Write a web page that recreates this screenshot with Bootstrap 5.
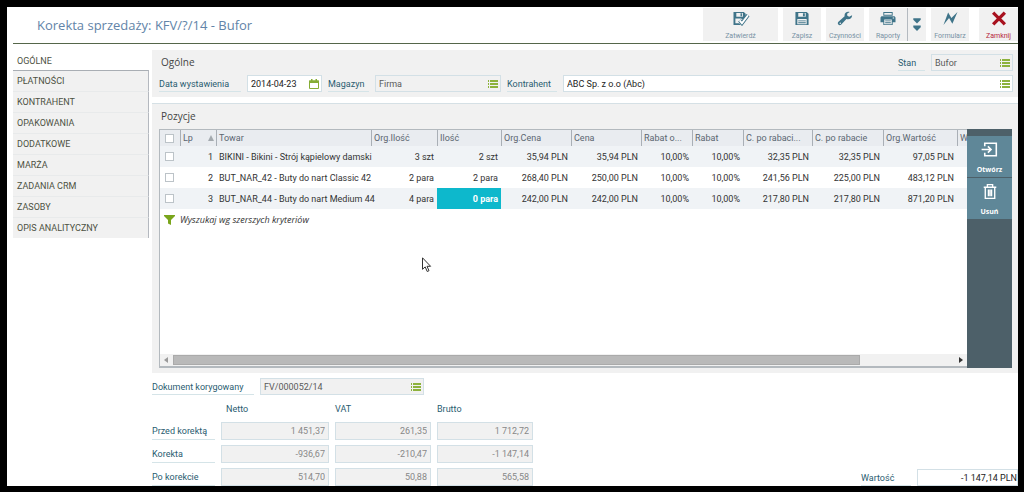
<!DOCTYPE html>
<html lang="pl">
<head>
<meta charset="utf-8">
<meta name="viewport" content="width=device-width, initial-scale=1">
<title>Korekta sprzedaży</title>
<link href="https://cdn.jsdelivr.net/npm/bootstrap@5.3.0/dist/css/bootstrap.min.css" rel="stylesheet">
<style>
  body { background: #000; padding: 7px 6px 6px 7px; font-family: Roboto, "Open Sans", sans-serif; font-size: 9px; line-height: 12px; color: #333; }
  .window { background: #fff; }
  .window svg { display: block; }
  .titlebar { height: 37px; margin-left: 6px; border-bottom: 1px solid #55664a; }
  .titlebar h1 { font-family: "Open Sans", sans-serif; font-size: 13px; line-height: 18px; color: #6284a8; padding-left: 24px; margin: 0; }
  .tools { padding-top: 1px; }
  .tool { background: #f1f1f1; border: 0; border-radius: 0; height: 33px; width: 38px; margin-left: 5px; padding: 3px 0 0; font-size: 7px; line-height: 10px; color: #7891a5; display: flex; flex-direction: column; align-items: center; gap: 5px; }
  .tool svg { width: 20px; height: 17px; fill: #3f7489; }
  .tool-wide { width: 75px; }
  .tool-more { width: 19px; margin-left: 0; border-left: 1px solid #b4bac0; padding-top: 8px; }
  .tool-form { margin-left: 5px; }
  .tool-close { color: #b5263a; width: 39px; margin-left: 10px; }
  .content { padding-top: 6px; }
  .side { width: 136px; margin: 0 3px 0 6px; }
  .side .nav-link { height: 21px; padding: 4px 4px 0; line-height: 12px; color: #4d5243; background: #f1f1f1; border-top: 1px solid #e8eaeb; border-right: 1px solid #b4b8bf; border-radius: 0; transition: none; }
  .side .nav-link.active { background: #fff; border-color: transparent; height: 20px; }
  .side .nav-link.active + .nav-link { border-top-color: #a9aeb4; }
  .panel { background: #f1f1f1; }
  .panel h2 { font-family: "Open Sans", sans-serif; font-size: 10px; line-height: 16px; color: #444; padding-left: 2px; margin: 0; }
  .general { padding: 4px 5px 5px 7px; margin-bottom: 6px; }
  .positions { padding: 4px 6px 5px 7px; border-top: 1px solid #d5e0e5; }
  .positions h2 { padding-bottom: 5px; }
  .cap { font-size: 9px; line-height: 12px; height: 17px; padding-top: 3px; margin-right: 6px; color: #2a5c70; border-bottom: 1px solid #d5e4e8; white-space: nowrap; }
  .cap-state { width: 27px; } .cap-date { width: 82px; } .cap-store { width: 41px; margin-left: 6px; } .cap-client { width: 50px; margin-left: 6px; }
  .cap-doc { width: 102px; } .cap-total { width: 50px; }
  .field { height: 17px; background: #f1f1f1; border: 1px solid #d3e0e6; padding-right: 2px; display: flex; align-items: center; }
  .field input { flex: 1 1 0; min-width: 0; width: 100%; height: 15px; border: 0; background: transparent; padding: 0 3px; font-size: 9px; line-height: 12px; color: #5a5a5a; outline: 0; }
  .field.edit { background: #fff; }
  .field.edit input { color: #222; }
  .field button { border: 0; background: none; padding: 0; }
  .w-date { width: 75px; } .w-store { width: 126px; } .w-state { width: 82px; } .w-doc { width: 164px; } .w-total { width: 101px; }
  .grid { background: #fff; border: 1px solid #b3b9be; border-right: 0; border-bottom-width: 2px; }
  .items { table-layout: fixed; width: 867px; border-collapse: separate; border-spacing: 0; }
  .items th { font-weight: 400; height: 16px; background: #e9ecf0; color: #5b6670; padding: 0 2px; border-left: 1px solid #a9afb6; white-space: nowrap; overflow: hidden; }
  .items th:first-child { border-left: 0; }
  .items td { height: 21px; padding: 0 3px 0 2px; text-align: right; white-space: nowrap; }
  .items td.txt { text-align: left; padding: 0 0 0 3px; }
  .items tbody tr:nth-child(odd) td { background: #f0f3f6; }
  .items tbody td.picked { background: #0db8cc !important; color: #fff; font-weight: 700; }
  .items input { appearance: none; display: block; width: 9px; height: 9px; margin: 0 0 0 3px; background: #fff; border: 1px solid #bcc3c8; }
  .search { height: 21px; padding-left: 4px; font-family: "Open Sans", sans-serif; font-style: italic; font-size: 8px; gap: 5px; color: #333; }
  .search { font-size: 9px; }
  .scroll { height: 12px; background: #f1f1f1; gap: 5px; padding: 0 4px; }
  .thumb { height: 10px; background: #b9b9b9; border: 1px solid #aaa; }
  .actions { width: 45px; background: #4d6069; padding-top: 7px; gap: 1px; }
  .actions button { height: 41px; border: 0; background: #5f8798; color: #fff; font-family: "Open Sans", sans-serif; font-size: 7px; font-weight: 700; line-height: 10px; padding: 3px 0 0; display: flex; flex-direction: column; align-items: center; gap: 5px; }
  .pointer { left: 32.5%; top: 54%; }
  .foot { padding-top: 5px; }
  .sums { display: grid; grid-template-columns: 63px 108px 96px 96px; column-gap: 6px; row-gap: 5px; }
  .sums .head { color: #2a5c70; height: 22px; padding: 3px 0 0; line-height: 22px; }
  .sums .head.first { padding-left: 5px; }
  .sums .field, .sums .cap { height: 18px; margin: 0; }
  .sums .field { padding: 0; }
  .sums input { text-align: right; color: #888; }
</style>
</head>
<body class="vh-100">
<svg width="0" height="0" class="position-absolute">
  <symbol id="list" viewBox="0 0 10 8"><path d="M0 0h1v2H0zM2 0h8v2H2zM0 3h1v2H0zM2 3h8v2H2zM0 6h1v2H0zM2 6h8v2H2z" fill="#8db23c"/></symbol>
  <symbol id="disk" viewBox="0 0 16 16"><path fill-rule="evenodd" d="M1 1h12l2 2v12H1zM4 2v4h8V2zM9 2.5h2v3H9zM3 8.500v5.500h10V8.500zM4 10h8v1H4zM4 12h8v1H4z"/></symbol>
</svg>
<div class="window h-100 d-flex flex-column overflow-hidden">
  <header class="titlebar d-flex flex-shrink-0">
    <h1 class="me-auto fw-normal text-nowrap align-self-center">Korekta sprzedaży: KFV/?/14 - Bufor</h1>
    <div class="tools d-flex align-items-start">
      <button class="tool tool-wide" type="button"><svg viewBox="0 0 18 16"><path fill-rule="evenodd" d="M1 1h11l2 2v2l-3 4-2-1H3v5h4l2 2H1zM4 2v4h7V2zM8.500 2.500h1.500v3H8.500z"/><path d="M7.500 10l2.500 3 6.500-8.500" fill="none" stroke="#3f7489" stroke-width="4"/><path d="M7.500 10l2.500 3 6.500-8.500" fill="none" stroke="#fff" stroke-width="2"/></svg>Zatwierdź</button>
      <button class="tool" type="button"><svg><use href="#disk"/></svg>Zapisz</button>
      <button class="tool" type="button"><svg viewBox="0 0 16 16"><path d="M15.500 4.500l-3 1.500-2-1-.300-2 2.800-2C10 0 7 2 7.600 5.500L1 11.500c-2 2.500 1 5 3 3L9.500 8.500C13 9.500 16 7.500 15.500 4.500zM3 12.200a.8.8 0 1 1-.1 1.600.8.8 0 0 1 .1-1.600z"/></svg>Czynności</button>
      <button class="tool" type="button"><svg viewBox="0 0 18 16"><path fill-rule="evenodd" d="M4 1h10v4H4zM5 2v2h8V2zM1 7l1-1.500h14L17 7v5h-3v3H4v-3H1zM5 9v5h8V9zM6 10h6v1H6zM6 12h6v1H6zM14 7v1h1.500V7z"/></svg>Raporty</button>
      <button class="tool tool-more" type="button" aria-label="Więcej"><svg viewBox="0 0 18 16"><path d="M5.500 2h7v1.500L9 7 5.500 3.500zM5.500 9h7v1.500L9 14l-3.500-3.500z"/></svg></button>
      <button class="tool tool-form" type="button"><svg viewBox="0 0 18 16"><path d="M2 15L7 1.500l3.500 6L17 1l-5.500 12.500L8 7.500z"/></svg>Formularz</button>
      <button class="tool tool-close" type="button"><svg viewBox="0 0 18 16"><path d="M4 3l10 10M14 3L4 13" stroke="#a8121f" stroke-width="3.500" stroke-linecap="square"/></svg>Zamknij</button>
    </div>
  </header>
  <div class="content d-flex flex-fill overflow-hidden">
    <nav class="side nav flex-column flex-nowrap flex-shrink-0">
      <a class="nav-link active" href="#">OGÓLNE</a>
      <a class="nav-link" href="#">PŁATNOŚCI</a>
      <a class="nav-link" href="#">KONTRAHENT</a>
      <a class="nav-link" href="#">OPAKOWANIA</a>
      <a class="nav-link" href="#">DODATKOWE</a>
      <a class="nav-link" href="#">MARŻA</a>
      <a class="nav-link" href="#">ZADANIA CRM</a>
      <a class="nav-link" href="#">ZASOBY</a>
      <a class="nav-link" href="#">OPIS ANALITYCZNY</a>
    </nav>
    <main class="flex-fill d-flex flex-column overflow-hidden">
      <section class="panel general flex-shrink-0">
        <div class="d-flex mb-1">
          <h2 class="me-auto fw-normal">Ogólne</h2>
          <label class="cap cap-state" for="state">Stan</label>
          <div class="field w-state"><input id="state" value="Bufor" readonly><button type="button" aria-label="Wybierz stan"><svg width="10" height="8"><use href="#list"/></svg></button></div>
        </div>
        <div class="d-flex">
          <label class="cap cap-date" for="date">Data wystawienia</label>
          <div class="field edit w-date"><input id="date" value="2014-04-23"><button type="button" aria-label="Kalendarz"><svg width="10" height="10" viewBox="0 0 10 10"><path d="M.5 2h9v7.500h-9z" fill="none" stroke="#86ad35"/><path d="M0 1.500h10V4H0zM2 0h1.500v2H2zM6.500 0H8v2H6.500z" fill="#86ad35"/></svg></button></div>
          <label class="cap cap-store" for="store">Magazyn</label>
          <div class="field w-store"><input id="store" value="Firma" readonly><button type="button" aria-label="Wybierz magazyn"><svg width="10" height="8"><use href="#list"/></svg></button></div>
          <label class="cap cap-client" for="client">Kontrahent</label>
          <div class="field edit flex-fill"><input id="client" value="ABC Sp. z o.o (Abc)"><button type="button" aria-label="Wybierz kontrahenta"><svg width="10" height="8"><use href="#list"/></svg></button></div>
        </div>
      </section>
      <section class="panel positions flex-fill d-flex flex-column overflow-hidden">
        <h2 class="fw-normal">Pozycje</h2>
        <div class="d-flex flex-fill overflow-hidden">
          <div class="grid position-relative flex-fill d-flex flex-column overflow-hidden">
            <table class="items">
              <colgroup><col style="width:20px"><col style="width:36px"><col style="width:155px"><col style="width:66px"><col style="width:64px"><col style="width:70px"><col style="width:70px"><col style="width:51px"><col style="width:51px"><col style="width:69px"><col style="width:71px"><col style="width:74px"><col style="width:70px"></colgroup>
              <thead><tr><th><input type="checkbox" aria-label="Zaznacz wszystkie"></th><th><span class="d-flex align-items-center justify-content-between">Lp<svg width="6" height="6" viewBox="0 0 6 6"><path d="M3 0l3 6H0z" fill="#a3a9ae"/></svg></span></th><th>Towar</th><th>Org.Ilość</th><th>Ilość</th><th>Org.Cena</th><th>Cena</th><th>Rabat o...</th><th>Rabat</th><th>C. po rabaci...</th><th>C. po rabacie</th><th>Org.Wartość</th><th>Wartość</th></tr></thead>
              <tbody>
                <tr><td><input type="checkbox" aria-label="Pozycja 1"></td><td>1</td><td class="txt">BIKINI - Bikini - Strój kąpielowy damski</td><td>3 szt</td><td>2 szt</td><td>35,94 PLN</td><td>35,94 PLN</td><td>10,00%</td><td>10,00%</td><td>32,35 PLN</td><td>32,35 PLN</td><td>97,05 PLN</td><td></td></tr>
                <tr><td><input type="checkbox" aria-label="Pozycja 2"></td><td>2</td><td class="txt">BUT_NAR_42 - Buty do nart Classic 42</td><td>2 para</td><td>2 para</td><td>268,40 PLN</td><td>250,00 PLN</td><td>10,00%</td><td>10,00%</td><td>241,56 PLN</td><td>225,00 PLN</td><td>483,12 PLN</td><td></td></tr>
                <tr><td><input type="checkbox" aria-label="Pozycja 3"></td><td>3</td><td class="txt">BUT_NAR_44 - Buty do nart Medium 44</td><td>4 para</td><td class="picked">0 para</td><td>242,00 PLN</td><td>242,00 PLN</td><td>10,00%</td><td>10,00%</td><td>217,80 PLN</td><td>217,80 PLN</td><td>871,20 PLN</td><td></td></tr>
              </tbody>
            </table>
            <div class="search d-flex align-items-center"><svg width="11" height="10" viewBox="0 0 11 10"><path d="M0 0h11v1L7 5v5L4 8.500V5L0 1z" fill="#7aa51c"/></svg>Wyszukaj wg szerszych kryteriów</div>
            <div class="scroll d-flex align-items-center mt-auto flex-shrink-0">
              <svg width="4" height="6" viewBox="0 0 4 6"><path d="M4 0v6L0 3z" fill="#9a9a9a"/></svg>
              <div class="flex-fill"><div class="thumb" style="width:88%"></div></div>
              <svg width="4" height="6" viewBox="0 0 4 6"><path d="M0 0v6l4-3z" fill="#333"/></svg>
            </div>
            <svg class="pointer position-absolute" width="10" height="16" viewBox="0 0 10 16"><path d="M.5.800v11.500l2.700-2.400 2 4.600 1.800-.8-2-4.400h3.600z" fill="#fff" stroke="#333"/></svg>
          </div>
          <div class="actions d-flex flex-column flex-shrink-0">
            <button type="button"><svg width="18" height="21" viewBox="0 0 16 20"><path d="M3 7V4h11v12H3v-3M0 10h9M6 7l3 3-3 3" fill="none" stroke="#fff" stroke-width="1.500"/></svg>Otwórz</button>
            <button type="button"><svg width="18" height="21" viewBox="0 0 16 20"><path d="M2 6h12M5.500 5.500V3.500h5v2M3.500 6v10.500h9V6M6.500 8v6.500M8 8v6.500M9.500 8v6.500" fill="none" stroke="#fff" stroke-width="1.300"/></svg>Usuń</button>
          </div>
        </div>
      </section>
      <footer class="foot d-flex align-items-end flex-shrink-0">
        <div>
          <div class="d-flex">
            <label class="cap cap-doc" for="doc">Dokument korygowany</label>
            <div class="field w-doc"><input id="doc" value="FV/000052/14" readonly><button type="button" aria-label="Wybierz dokument"><svg width="10" height="8"><use href="#list"/></svg></button></div>
          </div>
          <div class="sums">
            <span></span><span class="head first">Netto</span><span class="head">VAT</span><span class="head">Brutto</span>
            <label class="cap" for="a1">Przed korektą</label><div class="field"><input id="a1" value="1 451,37" readonly></div><div class="field"><input aria-label="VAT przed korektą" value="261,35" readonly></div><div class="field"><input aria-label="Brutto przed korektą" value="1 712,72" readonly></div>
            <label class="cap" for="b1">Korekta</label><div class="field"><input id="b1" value="-936,67" readonly></div><div class="field"><input aria-label="VAT korekta" value="-210,47" readonly></div><div class="field"><input aria-label="Brutto korekta" value="-1 147,14" readonly></div>
            <label class="cap" for="c1">Po korekcie</label><div class="field"><input id="c1" value="514,70" readonly></div><div class="field"><input aria-label="VAT po korekcie" value="50,88" readonly></div><div class="field"><input aria-label="Brutto po korekcie" value="565,58" readonly></div>
          </div>
        </div>
        <label class="cap cap-total ms-auto" for="total">Wartość</label>
        <div class="field edit w-total pe-0"><input class="text-end pe-0" id="total" value="-1 147,14 PLN"></div>
      </footer>
    </main>
  </div>
</div>
<script src="https://cdn.jsdelivr.net/npm/bootstrap@5.3.0/dist/js/bootstrap.bundle.min.js"></script>
</body>
</html>
